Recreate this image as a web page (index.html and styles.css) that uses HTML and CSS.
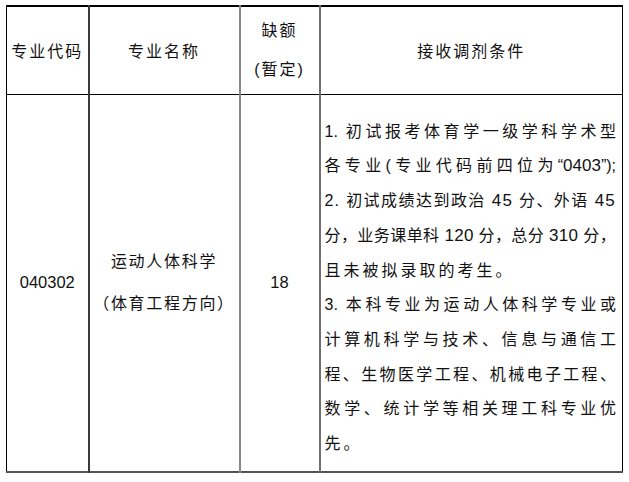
FILE: index.html
```html
<!DOCTYPE html>
<html lang="zh-CN">
<head>
<meta charset="utf-8">
<title>接收调剂条件</title>
<link rel="stylesheet" href="styles.css">
</head>
<body>
<div class="page">
  <table class="tbl">
    <colgroup>
      <col class="c1">
      <col class="c2">
      <col class="c3">
      <col class="c4">
    </colgroup>
    <thead>
      <tr class="head">
        <th class="cell b1">专业代码</th>
        <th class="cell b2">专业名称</th>
        <th class="cell b3"><span class="hl">缺额</span><span class="hl">(暂定)</span></th>
        <th class="cell b4">接收调剂条件</th>
      </tr>
    </thead>
    <tbody>
      <tr class="body">
        <td class="cell b1 num">040302</td>
        <td class="cell b2"><span class="nl">运动人体科学</span><span class="nl">（体育工程方向）</span></td>
        <td class="cell b3 num">18</td>
        <td class="cell b4 cond">
          <span class="ln">1. 初试报考体育学一级学科学术型</span>
          <span class="ln">各专业(专业代码前四位为“<span class="d">0403</span>”);</span>
          <span class="ln loose">2. 初试成绩达到政治 <span class="d">45</span> 分、外语 <span class="d">45</span></span>
          <span class="ln tight">分，业务课单科 <span class="d">120</span> 分，总分 <span class="d">310</span> 分，</span>
          <span class="ln end">且未被拟录取的考生。</span>
          <span class="ln">3. 本科专业为运动人体科学专业或</span>
          <span class="ln">计算机科学与技术、信息与通信工</span>
          <span class="ln">程、生物医学工程、机械电子工程、</span>
          <span class="ln">数学、统计学等相关理工科专业优</span>
          <span class="ln end">先。</span>
        </td>
      </tr>
    </tbody>
  </table>
</div>
</body>
</html>
```

FILE: styles.css
```css
html, body {
  margin: 0;
  padding: 0;
  background: #fff;
}

body {
  font-family: "Liberation Sans", "Noto Sans CJK SC", sans-serif;
  color: #111;
  font-size: 16px;
}

.page {
  padding: 5px 0 0 6px;
}

.tbl {
  width: 616px;
  table-layout: fixed;
  border-collapse: collapse;
  border-top: 2px solid #000;
  border-left: 1.5px solid #000;
  border-right: 1.5px solid #000;
  border-bottom: 2px solid #555;
}

.c1 { width: 82px; }
.c2 { width: 151px; }
.c3 { width: 80px; }
.c4 { width: 303px; }

.cell {
  padding: 0;
  text-align: center;
  vertical-align: middle;
  font-weight: normal;
  letter-spacing: 2px;
}

.b2 { border-left: 2px solid #3a3a3a; }
.b3 { border-left: 2px solid #888; }
.b4 { border-left: 2px solid #707070; }

.head {
  height: 88px;
}

.head .cell {
  border-bottom: 1.5px solid #000;
}

.hl {
  display: block;
  line-height: 39px;
}

.body {
  height: 378px;
}

.num {
  letter-spacing: 0;
  font-size: 16.5px;
}

.nl {
  display: block;
  line-height: 42px;
  letter-spacing: 1.7px;
}

.cond {
  text-align: left;
  padding: 11px 6px 0 4px;
  letter-spacing: 0;
}

.ln {
  display: block;
  line-height: 34.7px;
  text-align: justify;
  text-align-last: justify;
  white-space: nowrap;
}

.ln.loose {
  letter-spacing: 1.2px;
}

.ln.tight {
  letter-spacing: 0.3px;
}

.ln.end {
  text-align-last: left;
  letter-spacing: 3px;
}

.d {
  font-size: 17px;
}
```
